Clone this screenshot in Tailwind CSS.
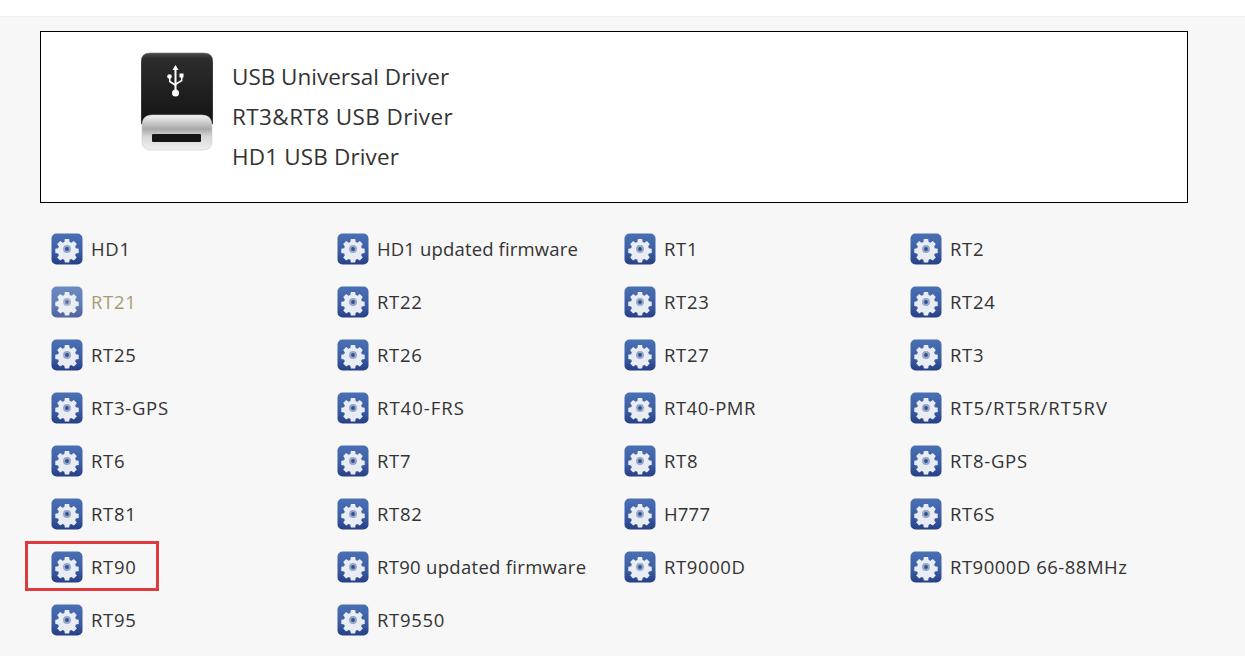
<!DOCTYPE html>
<html><head><meta charset="utf-8"><title>Drivers</title>
<script src="https://cdn.jsdelivr.net/npm/@tailwindcss/browser@4"></script></head>
<body class="w-[1245px] h-[656px] overflow-hidden bg-white font-['Open_Sans','Noto_Sans',sans-serif] text-[#333]">
<svg width="0" height="0" class="absolute"><defs>
<linearGradient id="b" x1="0" y1="0" x2="0" y2="1"><stop offset="0" stop-color="#4a70b4"/><stop offset="0.6" stop-color="#3a5ca3"/><stop offset="1" stop-color="#263f86"/></linearGradient>
<symbol id="g" viewBox="0 0 32 32"><rect x="0.500" y="0.500" width="31" height="31" rx="5" fill="url(#b)"/>
<g transform="translate(16 16) scale(.86) translate(-16 -16)"><path d="M13.500 4.500h5l.6 3.300 2 .8 2.800-1.900 3.500 3.500-1.900 2.800.8 2 3.300.6v5l-3.300.6-.8 2 1.900 2.800-3.500 3.500-2.800-1.900-2 .8-.6 3.300h-5l-.6-3.300-2-.8-2.800 1.900-3.500-3.500 1.900-2.800-.8-2-3.300-.6v-5l3.300-.6.8-2-1.900-2.800 3.500-3.500 2.800 1.900 2-.8z" fill="#e9edf3"/><circle cx="16" cy="16" r="4.600" fill="#95a7c8"/><circle cx="16" cy="16" r="2.200" fill="#34518f"/></g></symbol>
</defs></svg>
<div class="h-[17px] bg-white border-b border-[#f0f0f0]"></div>
<main class="h-[639px] bg-[#f7f7f7] pl-10 pt-[14px]">
<section class="w-[1148px] h-[172px] border border-black bg-white flex items-center pl-[100px]">
<svg width="72" height="100" viewBox="0 0 72 100" class="self-start mt-[20px]">
<defs><linearGradient id="m" x1="0" y1="0" x2="0" y2="1"><stop offset="0" stop-color="#f4f4f4"/><stop offset="0.4" stop-color="#a9a9a9"/><stop offset="0.62" stop-color="#d8d8d8"/><stop offset="1" stop-color="#f0f0f0"/></linearGradient>
<linearGradient id="d" x1="0" y1="0" x2="0" y2="1"><stop offset="0" stop-color="#4a4a4a"/><stop offset="0.08" stop-color="#2c2c2c"/><stop offset="1" stop-color="#141414"/></linearGradient></defs>
<path d="M0 72V10q0-9 9-9h54q9 0 9 9v62z" fill="url(#d)" stroke="#777" stroke-width=".6"/>
<path d="M1 74q0-11 10-11h50q10 0 10 11v15q0 9-9 9H10q-9 0-9-9z" fill="url(#m)" stroke="#ccc" stroke-width=".6"/>
<rect x="11" y="82" width="49" height="8" rx="1" fill="#161616"/>
<g fill="#fff"><path d="M34.500 13l3 5h-2v24h-2V18h-2z"/><path d="M34 34l-6-4v-5h1.500v4l5 3zM35 31l5-3v-3h1.500v4l-6.500 4z"/></g>
<circle cx="34.500" cy="41" r="3.500" fill="#fff"/><circle cx="28.500" cy="24.500" r="2.300" fill="#fff"/><rect x="38.500" y="21.500" width="4" height="4" fill="#fff"/>
</svg>
<div class="ml-[19px] text-[22.500px] leading-[40px] text-[#333]">
<p>USB Universal Driver</p><p class="tracking-[0.400px]">RT3&amp;RT8 USB Driver</p><p class="tracking-[0.150px]">HD1 USB Driver</p></div>
</section>
<ul class="relative mt-[19px] grid grid-cols-[286px_287px_286px_1fr] auto-rows-[53px] pl-[11px] text-[18.500px] tracking-[0.700px] text-[#333]">
<li class="flex items-center gap-[8px] h-[53px]"><svg class="size-8"><use href="#g"/></svg>HD1</li>
<li class="flex items-center gap-[8px] tracking-[0.150px]"><svg class="size-8"><use href="#g"/></svg>HD1 updated firmware</li>
<li class="flex items-center gap-[8px]"><svg class="size-8"><use href="#g"/></svg>RT1</li>
<li class="flex items-center gap-[8px]"><svg class="size-8"><use href="#g"/></svg>RT2</li>
<li class="flex items-center gap-[8px] text-[#aa9b74]"><svg class="size-8 opacity-80"><use href="#g"/></svg>RT21</li>
<li class="flex items-center gap-[8px]"><svg class="size-8"><use href="#g"/></svg>RT22</li>
<li class="flex items-center gap-[8px]"><svg class="size-8"><use href="#g"/></svg>RT23</li>
<li class="flex items-center gap-[8px]"><svg class="size-8"><use href="#g"/></svg>RT24</li>
<li class="flex items-center gap-[8px]"><svg class="size-8"><use href="#g"/></svg>RT25</li>
<li class="flex items-center gap-[8px]"><svg class="size-8"><use href="#g"/></svg>RT26</li>
<li class="flex items-center gap-[8px]"><svg class="size-8"><use href="#g"/></svg>RT27</li>
<li class="flex items-center gap-[8px]"><svg class="size-8"><use href="#g"/></svg>RT3</li>
<li class="flex items-center gap-[8px]"><svg class="size-8"><use href="#g"/></svg>RT3-GPS</li>
<li class="flex items-center gap-[8px] tracking-[1px]"><svg class="size-8"><use href="#g"/></svg>RT40-FRS</li>
<li class="flex items-center gap-[8px] tracking-[0.500px]"><svg class="size-8"><use href="#g"/></svg>RT40-PMR</li>
<li class="flex items-center gap-[8px] tracking-[1px]"><svg class="size-8"><use href="#g"/></svg>RT5/RT5R/RT5RV</li>
<li class="flex items-center gap-[8px]"><svg class="size-8"><use href="#g"/></svg>RT6</li>
<li class="flex items-center gap-[8px]"><svg class="size-8"><use href="#g"/></svg>RT7</li>
<li class="flex items-center gap-[8px]"><svg class="size-8"><use href="#g"/></svg>RT8</li>
<li class="flex items-center gap-[8px]"><svg class="size-8"><use href="#g"/></svg>RT8-GPS</li>
<li class="flex items-center gap-[8px]"><svg class="size-8"><use href="#g"/></svg>RT81</li>
<li class="flex items-center gap-[8px]"><svg class="size-8"><use href="#g"/></svg>RT82</li>
<li class="flex items-center gap-[8px] tracking-[0.200px]"><svg class="size-8"><use href="#g"/></svg>H777</li>
<li class="flex items-center gap-[8px]"><svg class="size-8"><use href="#g"/></svg>RT6S</li>
<li class="relative flex items-center gap-[8px]"><span class="absolute left-[-26px] top-[1px] w-[134px] h-[50px] border-[3px] border-[#dc3c3e]"></span><svg class="size-8"><use href="#g"/></svg>RT90</li>
<li class="flex items-center gap-[8px] tracking-[0.300px]"><svg class="size-8"><use href="#g"/></svg>RT90 updated firmware</li>
<li class="flex items-center gap-[8px] tracking-[0.600px]"><svg class="size-8"><use href="#g"/></svg>RT9000D</li>
<li class="flex items-center gap-[8px] tracking-[0.500px]"><svg class="size-8"><use href="#g"/></svg>RT9000D 66-88MHz</li>
<li class="flex items-center gap-[8px]"><svg class="size-8"><use href="#g"/></svg>RT95</li>
<li class="flex items-center gap-[8px]"><svg class="size-8"><use href="#g"/></svg>RT9550</li>
</ul>
</main>
</body></html>
